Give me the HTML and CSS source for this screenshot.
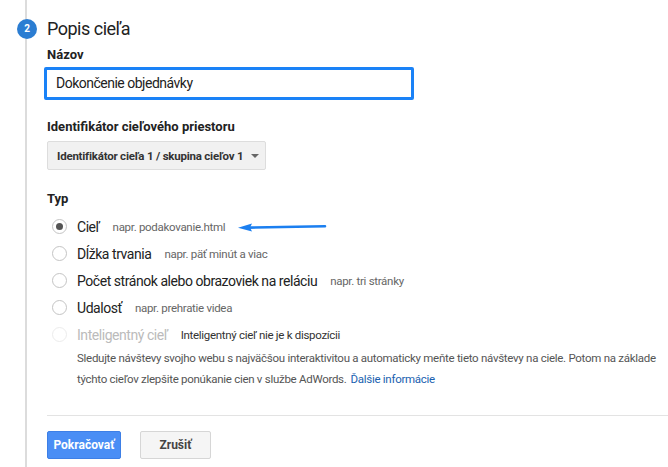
FILE: index.html
```html
<!DOCTYPE html>
<html lang="sk">
<head>
<meta charset="utf-8">
<title>Popis cieľa</title>
<link rel="stylesheet" href="styles.css">
</head>
<body>
<div class="page">
  <div class="rail">
    <span class="step">2</span>
  </div>
  <div class="content">
    <h1 class="title">Popis cieľa</h1>
    <div class="label">Názov</div>
    <div class="input">Dokončenie objednávky</div>
    <div class="label label-space">Identifikátor cieľového priestoru</div>
    <div class="select">
      <span class="select-text">Identifikátor cieľa 1 / skupina cieľov 1</span>
      <span class="caret"></span>
    </div>
    <div class="label label-typ">Typ</div>
    <div class="options">
      <div class="opt">
        <span class="radio checked"></span>
        <span class="opt-name">Cieľ</span>
        <span class="hint">napr. podakovanie.html</span>
        <svg class="arrow" width="92" height="12" viewBox="0 0 92 12">
          <path d="M12 6.6 L88 5.2" stroke="#1b7ff0" stroke-width="2.6" stroke-linecap="round" fill="none"/>
          <path d="M1 6.8 L15 2.4 L13 6.6 L15 10.6 Z" fill="#1b7ff0"/>
        </svg>
      </div>
      <div class="opt">
        <span class="radio"></span>
        <span class="opt-name">Dĺžka trvania</span>
        <span class="hint">napr. päť minút a viac</span>
      </div>
      <div class="opt">
        <span class="radio"></span>
        <span class="opt-name">Počet stránok alebo obrazoviek na reláciu</span>
        <span class="hint">napr. tri stránky</span>
      </div>
      <div class="opt">
        <span class="radio"></span>
        <span class="opt-name">Udalosť</span>
        <span class="hint">napr. prehratie videa</span>
      </div>
      <div class="opt disabled">
        <span class="radio"></span>
        <span class="opt-name">Inteligentný cieľ</span>
        <span class="hint dark">Inteligentný cieľ nie je k dispozícii</span>
      </div>
    </div>
    <p class="desc">Sledujte návštevy svojho webu s najväčšou interaktivitou a automaticky meňte tieto návštevy na ciele. Potom na základe týchto cieľov zlepšite ponúkanie cien v službe AdWords.<a href="#" class="link">Ďalšie informácie</a></p>
    <div class="sep"></div>
    <div class="buttons">
      <button class="btn primary">Pokračovať</button>
      <button class="btn secondary">Zrušiť</button>
    </div>
  </div>
</div>
</body>
</html>
```

FILE: styles.css
```css
html, body {
  margin: 0;
  padding: 0;
  background: #ffffff;
}
body {
  font-family: Roboto, "Liberation Sans", Arial, sans-serif;
  color: #222222;
  width: 668px;
  height: 467px;
  overflow: hidden;
}
.page {
  display: flex;
  min-height: 467px;
}
.rail {
  position: relative;
  width: 47px;
  flex: 0 0 47px;
}
.rail::before {
  content: "";
  position: absolute;
  left: 25px;
  top: 0;
  bottom: 0;
  width: 2px;
  background: #dcdcdc;
}
.step {
  position: absolute;
  left: 17px;
  top: 19px;
  width: 20px;
  height: 20px;
  border-radius: 50%;
  background: #2b7dd2;
  color: #ffffff;
  font-size: 10px;
  font-weight: 700;
  line-height: 20px;
  text-align: center;
}
.content {
  flex: 1;
  padding-top: 17px;
  min-width: 0;
}
.title {
  margin: 0;
  font-size: 18px;
  font-weight: 400;
  line-height: 24px;
  letter-spacing: -0.5px;
  color: #222222;
}
.label {
  margin-top: 6px;
  font-size: 13px;
  font-weight: 700;
  line-height: 16px;
  color: #222222;
}
.input {
  margin-top: 4px;
  margin-left: -3px;
  width: 355px;
  height: 27px;
  border: 3px solid #1a82f7;
  border-radius: 2px;
  padding-left: 9px;
  font-size: 14px;
  line-height: 27px;
  letter-spacing: -0.5px;
  color: #222222;
}
.label-space {
  margin-top: 19px;
}
.select {
  margin-top: 6px;
  width: 217px;
  height: 27px;
  box-sizing: content-box;
  border: 1px solid #dddddd;
  border-radius: 2px;
  background: #f1f1f1;
  display: flex;
  align-items: center;
  color: #333333;
}
.select-text {
  margin-left: 9px;
  font-size: 11.5px;
  font-weight: 700;
  letter-spacing: -0.22px;
  white-space: nowrap;
}
.caret {
  margin-left: 8px;
  width: 0;
  height: 0;
  border-left: 4px solid transparent;
  border-right: 4px solid transparent;
  border-top: 4px solid #666666;
}
.label-typ {
  margin-top: 21px;
}
.options {
  margin-top: 6px;
  padding-left: 5px;
  display: flex;
  flex-direction: column;
}
.opt {
  height: 27px;
  display: flex;
  align-items: center;
  white-space: nowrap;
}
.radio {
  width: 13px;
  height: 13px;
  border: 1px solid #c4c4c4;
  border-radius: 50%;
  background: #ffffff;
  box-sizing: content-box;
  position: relative;
  flex: 0 0 auto;
}
.radio.checked::after {
  content: "";
  position: absolute;
  left: 3px;
  top: 3px;
  width: 7px;
  height: 7px;
  border-radius: 50%;
  background: #555555;
}
.opt-name {
  margin-left: 10px;
  font-size: 14px;
  letter-spacing: -0.45px;
  color: #222222;
}
.hint {
  margin-left: 13px;
  font-size: 11.5px;
  letter-spacing: -0.3px;
  color: #666666;
}
.hint.dark {
  color: #333333;
}
.disabled .radio {
  border-color: #ececec;
}
.disabled .opt-name {
  color: #bbbbbb;
}
.arrow {
  margin-left: 12px;
  margin-top: 1px;
}
.desc {
  margin: 0 0 0 30px;
  font-size: 11.5px;
  line-height: 21px;
  letter-spacing: -0.28px;
  color: #555555;
}
.link {
  margin-left: 4px;
  color: #1a5fb0;
  text-decoration: none;
}
.sep {
  margin-top: 25px;
  height: 1px;
  background: #e3e3e3;
}
.buttons {
  margin-top: 15px;
  display: flex;
  gap: 19px;
}
.btn {
  height: 28px;
  border-radius: 2px;
  font-family: Roboto, "Liberation Sans", Arial, sans-serif;
  font-size: 12px;
  font-weight: 700;
  padding: 0;
  cursor: pointer;
}
.primary {
  width: 74px;
  background: #4a8ef5;
  border: 1px solid #3d7fe6;
  color: #ffffff;
}
.secondary {
  width: 71px;
  background: #f5f5f5;
  border: 1px solid #d6d6d6;
  color: #444444;
}
```
